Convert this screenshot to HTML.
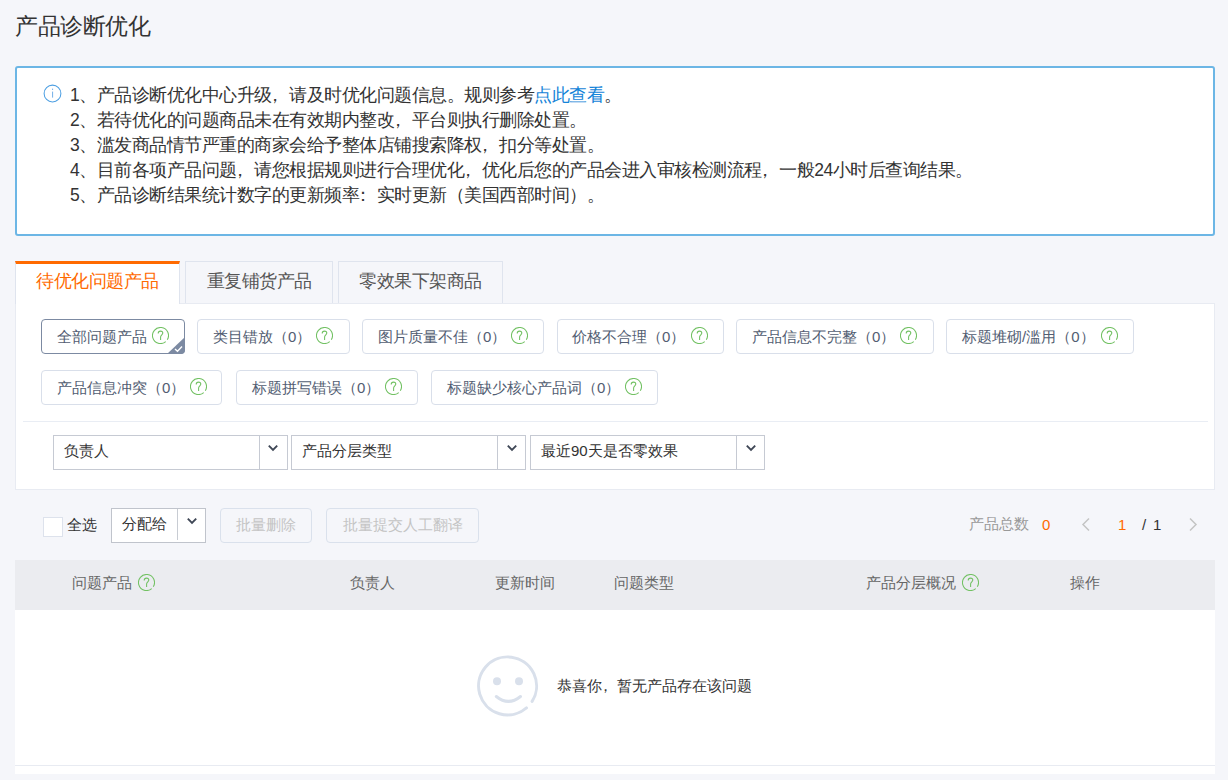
<!DOCTYPE html>
<html><head><meta charset="utf-8">
<style>
*{box-sizing:border-box;margin:0;padding:0}
html,body{width:1228px;height:780px;overflow:hidden;background:#f5f6fa;font-family:"Liberation Sans",sans-serif;color:#333}
.a{position:absolute}
.t{position:absolute;white-space:nowrap;line-height:1}
#title{left:15px;top:16px;font-size:22.5px;color:#333;letter-spacing:-0.5px}
#info{left:15px;top:66px;width:1200px;height:170px;border:2px solid #6cb6e5;border-radius:3px;background:#fff}
.il{position:absolute;left:70px;font-size:17.5px;color:#333;white-space:nowrap;line-height:1;letter-spacing:-0.5px}
.il a{color:#1584d8;text-decoration:none}
.tab{position:absolute;top:261px;height:42px;border:1px solid #dfe4ee;border-bottom:none;background:#f5f6fa;font-size:17.5px;color:#555;text-align:center;letter-spacing:-0.5px}
.tab span{position:absolute;left:0;right:0;top:11px;line-height:1}
#tab1{left:15px;width:165px;background:#fff;border-top:3px solid #ff6a00;color:#ff6a00;height:43px}
#tab1 span{top:9px}
#panel{left:15px;top:303px;width:1200px;height:187px;background:#fff;border:1px solid #e8ebf2}
.chip{position:absolute;height:35px;border:1px solid #d9dfea;border-radius:4px;background:#fff;font-size:15px;color:#525d72}
.chip .tx{position:absolute;top:9px;line-height:1;white-space:nowrap}
.q{position:absolute}
.sel{position:absolute;top:435px;width:235px;height:35px;border:1px solid #c6cad3;background:#fff;font-size:15px;color:#333}
.sel .tx{position:absolute;left:10px;top:7px;line-height:1;white-space:nowrap}
.sel .sep{position:absolute;right:27px;top:0;bottom:0;width:1px;background:#c6cad3}
.chev{position:absolute;width:12px;height:9px}
.btn{position:absolute;top:508px;height:35px;border:1px solid #dae1ec;border-radius:4px;font-size:15px;color:#c4c4c4}
.btn .tx{position:absolute;top:7.5px;line-height:1;white-space:nowrap}
.th{position:absolute;top:575px;font-size:15px;color:#666;line-height:1;white-space:nowrap}
.pl{position:relative;left:-0.3em}
</style></head><body>
<div id="title" class="t">产品诊断优化</div>

<div id="info" class="a"></div>
<svg class="a" style="left:43px;top:83.5px" width="19" height="19" viewBox="0 0 19 19"><circle cx="9.5" cy="9.5" r="8.4" fill="none" stroke="#4d9fe2" stroke-width="1.05"/><rect x="9" y="4.6" width="1.1" height="1.4" fill="#7fb6ea"/><rect x="9" y="7.6" width="1.1" height="6" fill="#7fb6ea"/></svg>
<div class="il" style="top:87px">1、产品诊断优化中心升级<span class="pl">，</span>请及时优化问题信息。规则参考<a>点此查看</a>。</div>
<div class="il" style="top:112px">2、若待优化的问题商品未在有效期内整改<span class="pl">，</span>平台则执行删除处置。</div>
<div class="il" style="top:137px">3、滥发商品情节严重的商家会给予整体店铺搜索降权<span class="pl">，</span>扣分等处置。</div>
<div class="il" style="top:162px">4、目前各项产品问题<span class="pl">，</span>请您根据规则进行合理优化<span class="pl">，</span>优化后您的产品会进入审核检测流程<span class="pl">，</span>一般24小时后查询结果。</div>
<div class="il" style="top:187px">5、产品诊断结果统计数字的更新频率<span class="pl">：</span>实时更新（美国西部时间）。</div>

<div id="panel" class="a"></div>
<div id="tab1" class="tab"><span>待优化问题产品</span></div>
<div class="tab" style="left:185px;width:148px"><span>重复铺货产品</span></div>
<div class="tab" style="left:338px;width:165px"><span>零效果下架商品</span></div>

<!-- chips row 1 -->
<div class="chip" style="left:41px;top:319px;width:144px;border-color:#7c8aa2"><span class="tx" style="left:15px">全部问题产品</span></div>
<div class="chip" style="left:197px;top:319px;width:153px"><span class="tx" style="left:15px">类目错放（0）</span></div>
<div class="chip" style="left:362px;top:319px;width:182px"><span class="tx" style="left:15px">图片质量不佳（0）</span></div>
<div class="chip" style="left:557px;top:319px;width:167px"><span class="tx" style="left:14px">价格不合理（0）</span></div>
<div class="chip" style="left:736px;top:319px;width:198px"><span class="tx" style="left:15px">产品信息不完整（0）</span></div>
<div class="chip" style="left:946px;top:319px;width:188px"><span class="tx" style="left:15px">标题堆砌/滥用（0）</span></div>
<!-- chips row 2 -->
<div class="chip" style="left:41px;top:370px;width:181px"><span class="tx" style="left:15px">产品信息冲突（0）</span></div>
<div class="chip" style="left:236px;top:370px;width:182px"><span class="tx" style="left:15px">标题拼写错误（0）</span></div>
<div class="chip" style="left:431px;top:370px;width:227px"><span class="tx" style="left:15px">标题缺少核心产品词（0）</span></div>

<!-- active chip corner -->
<svg class="a" style="left:167px;top:337px" width="18" height="17" viewBox="0 0 18 17"><path d="M18 0 L18 13 Q18 17 14 17 L0 17 Z" fill="#7c8aa2"/><path d="M8 12 L10.5 14.3 L15 9.5" fill="none" stroke="#fff" stroke-width="1.4"/></svg>

<!-- question icons -->
<svg class="q" style="left:152px;top:327px" width="17" height="17" viewBox="0 0 17 17"><path d="M13.75 14.54 A8 8 0 1 1 15.28 12.74" fill="none" stroke="#72c163" stroke-width="1.05"/><path d="M6.2 6.4 C6.2 4.8 7.3 4.1 8.5 4.1 C9.8 4.1 10.8 4.9 10.8 6.1 C10.8 7.7 8.6 8 8.6 10 L8.6 13" fill="none" stroke="#72c163" stroke-width="1.05"/></svg>
<svg class="q" style="left:316px;top:327px" width="17" height="17" viewBox="0 0 17 17"><path d="M13.75 14.54 A8 8 0 1 1 15.28 12.74" fill="none" stroke="#72c163" stroke-width="1.05"/><path d="M6.2 6.4 C6.2 4.8 7.3 4.1 8.5 4.1 C9.8 4.1 10.8 4.9 10.8 6.1 C10.8 7.7 8.6 8 8.6 10 L8.6 13" fill="none" stroke="#72c163" stroke-width="1.05"/></svg>
<svg class="q" style="left:511px;top:327px" width="17" height="17" viewBox="0 0 17 17"><path d="M13.75 14.54 A8 8 0 1 1 15.28 12.74" fill="none" stroke="#72c163" stroke-width="1.05"/><path d="M6.2 6.4 C6.2 4.8 7.3 4.1 8.5 4.1 C9.8 4.1 10.8 4.9 10.8 6.1 C10.8 7.7 8.6 8 8.6 10 L8.6 13" fill="none" stroke="#72c163" stroke-width="1.05"/></svg>
<svg class="q" style="left:691px;top:327px" width="17" height="17" viewBox="0 0 17 17"><path d="M13.75 14.54 A8 8 0 1 1 15.28 12.74" fill="none" stroke="#72c163" stroke-width="1.05"/><path d="M6.2 6.4 C6.2 4.8 7.3 4.1 8.5 4.1 C9.8 4.1 10.8 4.9 10.8 6.1 C10.8 7.7 8.6 8 8.6 10 L8.6 13" fill="none" stroke="#72c163" stroke-width="1.05"/></svg>
<svg class="q" style="left:900px;top:327px" width="17" height="17" viewBox="0 0 17 17"><path d="M13.75 14.54 A8 8 0 1 1 15.28 12.74" fill="none" stroke="#72c163" stroke-width="1.05"/><path d="M6.2 6.4 C6.2 4.8 7.3 4.1 8.5 4.1 C9.8 4.1 10.8 4.9 10.8 6.1 C10.8 7.7 8.6 8 8.6 10 L8.6 13" fill="none" stroke="#72c163" stroke-width="1.05"/></svg>
<svg class="q" style="left:1101px;top:327px" width="17" height="17" viewBox="0 0 17 17"><path d="M13.75 14.54 A8 8 0 1 1 15.28 12.74" fill="none" stroke="#72c163" stroke-width="1.05"/><path d="M6.2 6.4 C6.2 4.8 7.3 4.1 8.5 4.1 C9.8 4.1 10.8 4.9 10.8 6.1 C10.8 7.7 8.6 8 8.6 10 L8.6 13" fill="none" stroke="#72c163" stroke-width="1.05"/></svg>
<svg class="q" style="left:190px;top:378px" width="17" height="17" viewBox="0 0 17 17"><path d="M13.75 14.54 A8 8 0 1 1 15.28 12.74" fill="none" stroke="#72c163" stroke-width="1.05"/><path d="M6.2 6.4 C6.2 4.8 7.3 4.1 8.5 4.1 C9.8 4.1 10.8 4.9 10.8 6.1 C10.8 7.7 8.6 8 8.6 10 L8.6 13" fill="none" stroke="#72c163" stroke-width="1.05"/></svg>
<svg class="q" style="left:385px;top:378px" width="17" height="17" viewBox="0 0 17 17"><path d="M13.75 14.54 A8 8 0 1 1 15.28 12.74" fill="none" stroke="#72c163" stroke-width="1.05"/><path d="M6.2 6.4 C6.2 4.8 7.3 4.1 8.5 4.1 C9.8 4.1 10.8 4.9 10.8 6.1 C10.8 7.7 8.6 8 8.6 10 L8.6 13" fill="none" stroke="#72c163" stroke-width="1.05"/></svg>
<svg class="q" style="left:625px;top:378px" width="17" height="17" viewBox="0 0 17 17"><path d="M13.75 14.54 A8 8 0 1 1 15.28 12.74" fill="none" stroke="#72c163" stroke-width="1.05"/><path d="M6.2 6.4 C6.2 4.8 7.3 4.1 8.5 4.1 C9.8 4.1 10.8 4.9 10.8 6.1 C10.8 7.7 8.6 8 8.6 10 L8.6 13" fill="none" stroke="#72c163" stroke-width="1.05"/></svg>

<div class="a" style="left:23px;top:421px;width:1185px;height:1px;background:#e9edf4"></div>

<div class="sel" style="left:53px"><span class="tx">负责人</span><div class="sep"></div></div>
<div class="sel" style="left:291px"><span class="tx">产品分层类型</span><div class="sep"></div></div>
<div class="sel" style="left:530px"><span class="tx">最近90天是否零效果</span><div class="sep"></div></div>
<svg class="chev" style="left:267px;top:444px" viewBox="0 0 12 9"><path d="M1.8 1.6 L6 5.8 L10.2 1.6" fill="none" stroke="#3f4756" stroke-width="1.9"/></svg>
<svg class="chev" style="left:506px;top:444px" viewBox="0 0 12 9"><path d="M1.8 1.6 L6 5.8 L10.2 1.6" fill="none" stroke="#3f4756" stroke-width="1.9"/></svg>
<svg class="chev" style="left:745px;top:444px" viewBox="0 0 12 9"><path d="M1.8 1.6 L6 5.8 L10.2 1.6" fill="none" stroke="#3f4756" stroke-width="1.9"/></svg>

<!-- action bar -->
<div class="a" style="left:43px;top:517px;width:20px;height:20px;border:1px solid #dde2ec;background:#fff"></div>
<div class="t" style="left:67px;top:517px;font-size:15px;color:#333">全选</div>
<div class="a" style="left:111px;top:508px;width:95px;height:35px;border:1px solid #c0c4cc;background:#fff"></div>
<div class="a" style="left:177px;top:509px;width:1px;height:31px;background:#c8ccd3"></div>
<div class="t" style="left:122px;top:516px;font-size:15px;color:#333">分配给</div>
<svg class="chev" style="left:186px;top:517px" viewBox="0 0 12 9"><path d="M1.8 1.6 L6 5.8 L10.2 1.6" fill="none" stroke="#3f4756" stroke-width="1.9"/></svg>
<div class="btn" style="left:220px;width:92px"><span class="tx" style="left:15px">批量删除</span></div>
<div class="btn" style="left:326px;width:153px"><span class="tx" style="left:16px">批量提交人工翻译</span></div>

<div class="t" style="left:969px;top:516px;font-size:15px;color:#999">产品总数</div>
<div class="t" style="left:1042px;top:517px;font-size:15px;color:#ff6a00">0</div>
<svg class="a" style="left:1080px;top:517px" width="12" height="15" viewBox="0 0 12 15"><path d="M9 1.5 L3 7.5 L9 13.5" fill="none" stroke="#c4c4c4" stroke-width="1.5"/></svg>
<div class="t" style="left:1118px;top:517px;font-size:15px;color:#ff6a00">1</div>
<div class="t" style="left:1142px;top:517px;font-size:15px;color:#333">/</div><div class="t" style="left:1153px;top:517px;font-size:15px;color:#333">1</div>
<svg class="a" style="left:1187px;top:517px" width="12" height="15" viewBox="0 0 12 15"><path d="M3 1.5 L9 7.5 L3 13.5" fill="none" stroke="#c4c4c4" stroke-width="1.5"/></svg>

<!-- table -->
<div class="a" style="left:15px;top:560px;width:1200px;height:50px;background:#ebecf0"></div>
<div class="th" style="left:72px">问题产品</div>
<svg class="q" style="left:138px;top:574px" width="17" height="17" viewBox="0 0 17 17"><path d="M13.75 14.54 A8 8 0 1 1 15.28 12.74" fill="none" stroke="#72c163" stroke-width="1.05"/><path d="M6.2 6.4 C6.2 4.8 7.3 4.1 8.5 4.1 C9.8 4.1 10.8 4.9 10.8 6.1 C10.8 7.7 8.6 8 8.6 10 L8.6 13" fill="none" stroke="#72c163" stroke-width="1.05"/></svg>
<div class="th" style="left:350px">负责人</div>
<div class="th" style="left:495px">更新时间</div>
<div class="th" style="left:614px">问题类型</div>
<div class="th" style="left:866px">产品分层概况</div>
<svg class="q" style="left:962px;top:574px" width="17" height="17" viewBox="0 0 17 17"><path d="M13.75 14.54 A8 8 0 1 1 15.28 12.74" fill="none" stroke="#72c163" stroke-width="1.05"/><path d="M6.2 6.4 C6.2 4.8 7.3 4.1 8.5 4.1 C9.8 4.1 10.8 4.9 10.8 6.1 C10.8 7.7 8.6 8 8.6 10 L8.6 13" fill="none" stroke="#72c163" stroke-width="1.05"/></svg>
<div class="th" style="left:1070px">操作</div>

<div class="a" style="left:15px;top:610px;width:1200px;height:164px;background:#fff"></div>
<div class="a" style="left:15px;top:765px;width:1200px;height:1px;background:#e8ebf2"></div>

<svg class="a" style="left:475px;top:654px" width="65" height="65" viewBox="0 0 65 65">
<path d="M51.5 53.9 A29 29 0 1 1 57.1 47.4" fill="none" stroke="#d9e0eb" stroke-width="3" stroke-linecap="round"/>
<circle cx="22" cy="27.3" r="4" fill="#d9e0eb"/><circle cx="44" cy="27.3" r="4" fill="#d9e0eb"/>
<path d="M21.3 42.5 Q33.4 52.3 45.5 42.5" fill="none" stroke="#d9e0eb" stroke-width="3" stroke-linecap="round"/>
</svg>
<div class="t" style="left:557px;top:678px;font-size:15px;color:#333">恭喜你<span class="pl">，</span>暂无产品存在该问题</div>
</body></html>
